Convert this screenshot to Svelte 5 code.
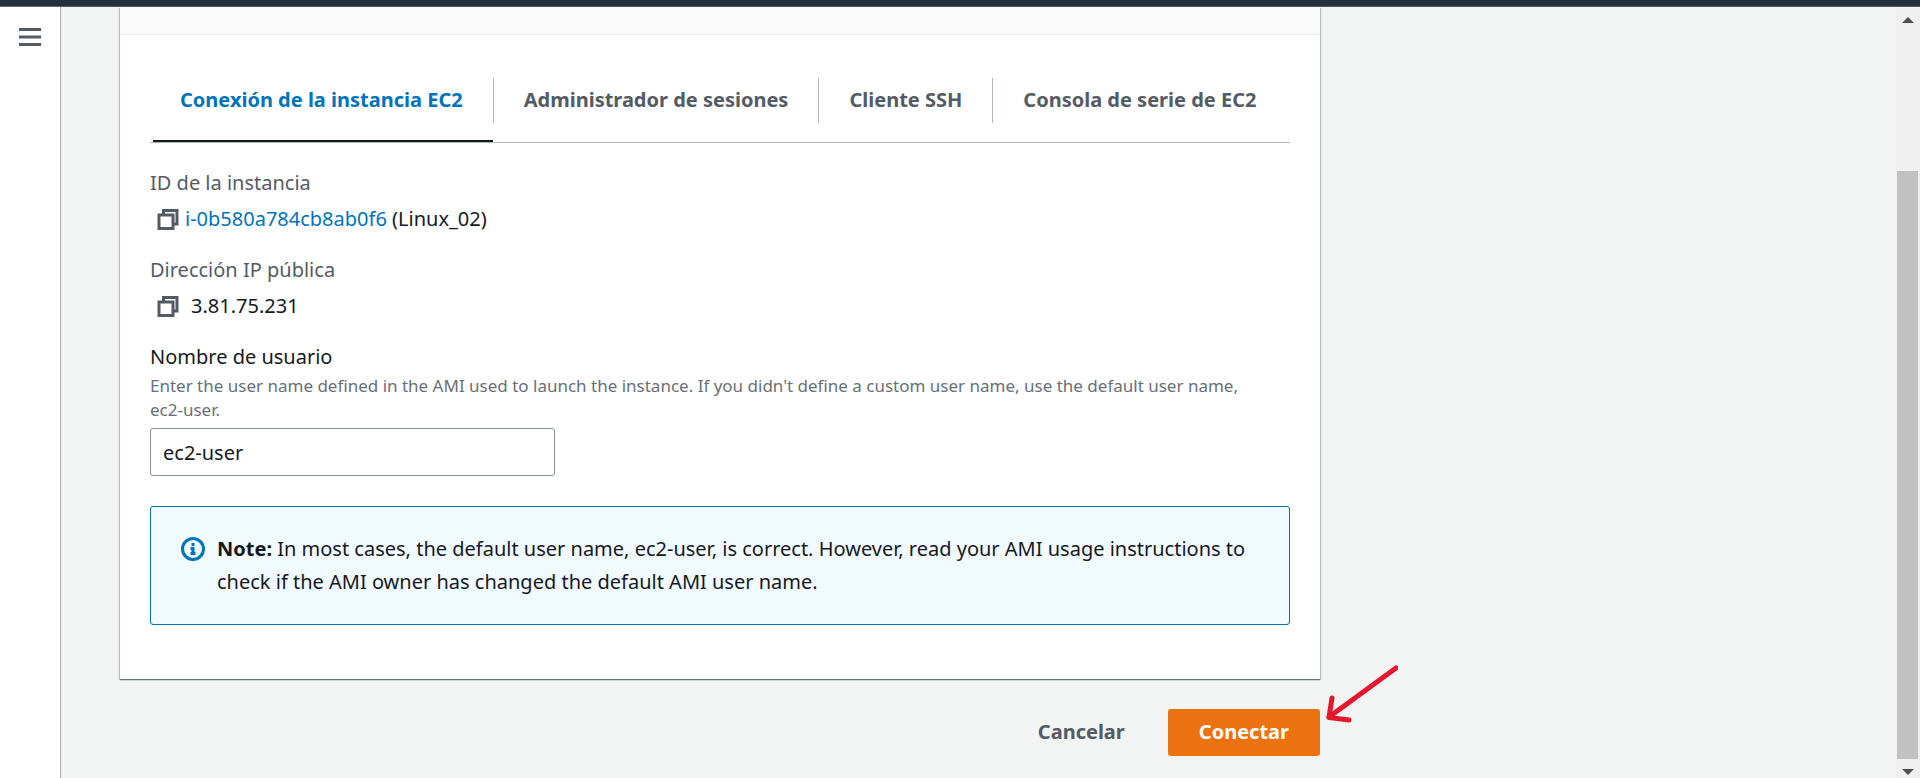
<script>
  const tabs = [
    'Conexión de la instancia EC2',
    'Administrador de sesiones',
    'Cliente SSH',
    'Consola de serie de EC2'
  ];
  let active = $state(0);
  let username = $state('ec2-user');
</script>

{#snippet copyIcon()}
  <svg width="22" height="22" viewBox="0 0 22 22" fill="none" stroke="#545b64" stroke-width="3" aria-hidden="true">
    <path d="M2 7h14v13.500H2z" />
    <path d="M6.500 6.500V2.500H20v13.500h-4" />
  </svg>
{/snippet}

<div class="app">
  <header class="topbar"></header>
  <div class="body">
    <nav class="rail">
      <button class="menu" aria-label="Menú">
        <svg width="22" height="18" viewBox="0 0 22 18" stroke="#545b64" stroke-width="3" aria-hidden="true">
          <path d="M0 1.500h22M0 9h22M0 16.500h22" />
        </svg>
      </button>
    </nav>

    <main>
      <div class="column">
        <section class="panel">
          <div class="panel-head"></div>
          <div class="panel-body">
            <div class="tabs" role="tablist">
              {#each tabs as tab, i}
                <button role="tab" class="tab" class:active={active === i} aria-selected={active === i} onclick={() => (active = i)}>
                  <span>{tab}</span>
                </button>
              {/each}
            </div>

            <dl>
              <div class="pair">
                <dt>ID de la instancia</dt>
                <dd>
                  <button class="copy" aria-label="Copiar ID">{@render copyIcon()}</button>
                  <span><a href="#instance">i-0b580a784cb8ab0f6</a> (Linux_02)</span>
                </dd>
              </div>
              <div class="pair">
                <dt>Dirección IP pública</dt>
                <dd class="wide">
                  <button class="copy" aria-label="Copiar IP">{@render copyIcon()}</button>
                  <span>3.81.75.231</span>
                </dd>
              </div>
            </dl>

            <div class="field">
              <label for="username">Nombre de usuario</label>
              <p id="hint">Enter the user name defined in the AMI used to launch the instance. If you didn't define a custom user name, use the default user name, <span class="word">ec2-user.</span></p>
              <input id="username" type="text" aria-describedby="hint" bind:value={username} />
            </div>

            <div class="note">
              <svg width="24" height="24" viewBox="0 0 24 24" fill="none" stroke="#0073bb" stroke-width="3" aria-hidden="true">
                <circle cx="12" cy="12" r="10.500" />
                <path d="M10.500 7.500h3M9.500 11.500h2.500v5M9.500 16.500h5" />
              </svg>
              <p><strong>Note:</strong> In most cases, the default user name, ec2-user, is correct. However, read your AMI usage instructions to check if the AMI owner has changed the default AMI user name.</p>
            </div>
          </div>
        </section>

        <div class="actions">
          <button class="btn">Cancelar</button>
          <button class="btn primary">Conectar</button>
          <svg class="arrow" width="74" height="60" viewBox="0 0 74 60" fill="none" stroke="#e5172c" stroke-width="5" stroke-linecap="round" stroke-linejoin="round" aria-hidden="true">
            <path d="M72 4L5 53" />
            <path d="M8 34L5 53.500L25 56" />
          </svg>
        </div>
      </div>
    </main>

    <div class="scrollbar" aria-hidden="true">
      <svg width="12" height="6" viewBox="0 0 12 6" fill="#505050"><path d="M6 0l6 6H0z" /></svg>
      <div class="track"><div class="thumb"></div></div>
      <svg width="12" height="6" viewBox="0 0 12 6" fill="#505050"><path d="M0 0h12L6 6z" /></svg>
    </div>
  </div>
</div>

<style>
  :global(body) {
    margin: 0;
  }
  .app {
    display: flex;
    flex-direction: column;
    height: 100vh;
    overflow: hidden;
    background: #f2f3f3;
    color: #16191f;
    font: 20px/33px 'Noto Sans', 'Open Sans', sans-serif;
  }
  .app * {
    box-sizing: border-box;
  }
  button,
  input {
    font: inherit;
  }
  button {
    border: 0;
    padding: 0;
    background: none;
    cursor: pointer;
  }
  svg {
    display: block;
    flex: none;
  }
  p,
  dl,
  dd {
    margin: 0;
  }
  .topbar {
    flex: none;
    height: 7px;
    background: #232f3e;
    border-bottom: 1px solid #545b64;
  }
  .body {
    flex: 1;
    min-height: 0;
    display: flex;
  }
  .rail {
    flex: none;
    width: 60px;
    padding: 21px 19px;
    background: #fff;
    box-shadow: 1px 0 1px #aab7b8;
  }
  .menu {
    display: block;
  }
  main {
    flex: 1;
    min-width: 0;
    padding: 0 60px;
  }
  .column {
    max-width: 1200px;
  }
  .panel {
    background: #fff;
    box-shadow:
      0 1px 1px #687878,
      1px 1px 1px #c3caca,
      -1px 1px 1px #c3caca;
  }
  .panel-head {
    height: 28px;
    background: #fafafa;
    border-bottom: 1px solid #eaeded;
  }
  .panel-body {
    padding: 30px 30px 54px;
  }
  .tabs {
    display: flex;
    border-bottom: 1px solid #aab7b8;
  }
  .tab {
    position: relative;
    padding: 13px 0 19px;
    color: #545b64;
    font-weight: 700;
  }
  .tab span {
    display: block;
    padding: 5px 30px 7px;
    border-right: 1px solid #aab7b8;
  }
  .tab:last-child span {
    border-right: 0;
  }
  .tab.active {
    color: #0073bb;
  }
  .tab.active::after {
    content: '';
    position: absolute;
    inset: auto 1px 0 3px;
    height: 2px;
    background: #16191f;
  }
  dl {
    padding-top: 23px;
  }
  .pair {
    padding-bottom: 18px;
  }
  dt {
    color: #545b64;
  }
  dd {
    display: flex;
    align-items: center;
    gap: 6px;
    padding: 3px 0 0 7px;
  }
  dd.wide {
    gap: 12px;
  }
  a {
    color: #0073bb;
    text-decoration: none;
  }
  .field {
    display: flex;
    flex-direction: column;
    padding-bottom: 30px;
  }
  .field p {
    padding: 1px 0 6px;
    color: #687078;
    font-size: 17px;
    line-height: 24px;
  }
  .word {
    white-space: nowrap;
  }
  input {
    width: 100%;
    max-width: 405px;
    height: 48px;
    padding: 0 12px;
    border: 1px solid #879596;
    border-radius: 3px;
    color: inherit;
    background: #fff;
  }
  .note {
    display: flex;
    gap: 12px;
    padding: 25px 30px 26px;
    border: 1px solid #0073bb;
    border-radius: 3px;
    background: #f1faff;
  }
  .note svg {
    margin-top: 5px;
  }
  .actions {
    position: relative;
    display: flex;
    justify-content: flex-end;
    gap: 12px;
    padding-top: 30px;
  }
  .btn {
    padding: 6px 31px 8px;
    border-radius: 3px;
    color: #545b64;
    font-weight: 700;
  }
  .primary {
    color: #fff;
    background: #ec7211;
  }
  .arrow {
    position: absolute;
    left: calc(100% + 4px);
    bottom: 32px;
  }
  .scrollbar {
    flex: none;
    width: 24px;
    display: flex;
    flex-direction: column;
    align-items: center;
    padding: 10px 2px 3px 1px;
    background: #f0f0f0;
  }
  .track {
    flex: 1;
    width: 100%;
    padding: 148px 0 10px;
  }
  .thumb {
    height: 100%;
    background: #c1c1c1;
  }
</style>
